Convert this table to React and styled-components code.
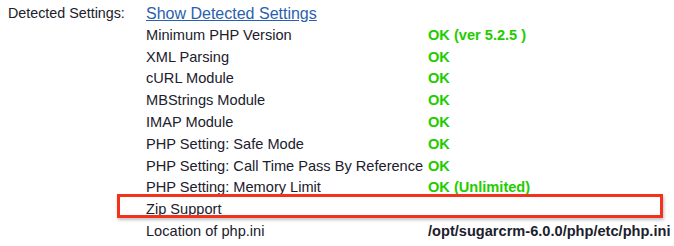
import React from 'react';
import styled, { createGlobalStyle } from 'styled-components';

const rows = [
  { name: 'Minimum PHP Version', status: 'OK (ver 5.2.5 )' },
  { name: 'XML Parsing', status: 'OK' },
  { name: 'cURL Module', status: 'OK' },
  { name: 'MBStrings Module', status: 'OK' },
  { name: 'IMAP Module', status: 'OK' },
  { name: 'PHP Setting: Safe Mode', status: 'OK' },
  { name: 'PHP Setting: Call Time Pass By Reference', status: 'OK' },
  { name: 'PHP Setting: Memory Limit', status: 'OK (Unlimited)' },
  { name: 'Zip Support', status: '', marked: true },
  { name: 'Location of php.ini', status: '/opt/sugarcrm-6.0.0/php/etc/php.ini', path: true },
];

const App = () => (
  <>
    <GlobalStyle />
    <Page>
      <Label>Detected Settings:</Label>
      <Settings>
        <ShowLink href="#">Show Detected Settings</ShowLink>
        {rows.map((row) => (
          <Row key={row.name} marked={row.marked}>
            <Name>{row.name}</Name>
            <Status path={row.path}>{row.status}</Status>
          </Row>
        ))}
      </Settings>
    </Page>
  </>
);

const GlobalStyle = createGlobalStyle`
  body {
    margin: 0;
    background: #fff;
    font-family: "Liberation Sans", Arial, sans-serif;
    font-size: 14.6px;
    color: #20202c;
  }
`;

const Page = styled.div`
  display: grid;
  grid-template-columns: 138px 1fr;
  padding: 3px 0 0 8px;
  line-height: 21.8px;
`;

const Label = styled.div`
  font-size: 14.3px;
  white-space: nowrap;
`;

const Settings = styled.div`
  display: flex;
  flex-direction: column;
`;

const ShowLink = styled.a`
  color: #2a5fae;
  font-size: 16px;
  text-decoration: underline;
  align-self: flex-start;
`;

const Row = styled.div`
  position: relative;
  display: grid;
  grid-template-columns: 282px auto;
  white-space: nowrap;

  ${({ marked }) =>
    marked &&
    `
    &::after {
      content: '';
      position: absolute;
      left: -29px;
      width: 546px;
      top: -5px;
      height: 24px;
      box-sizing: border-box;
      border: 3px solid #f3321e;
      box-shadow: 1px 2px 3px rgba(0, 0, 0, 0.25);
    }
  `}
`;

const Name = styled.span``;

const Status = styled.span`
  font-weight: bold;
  color: ${({ path }) => (path ? '#20202c' : '#1fcc00')};
`;

export default App;
